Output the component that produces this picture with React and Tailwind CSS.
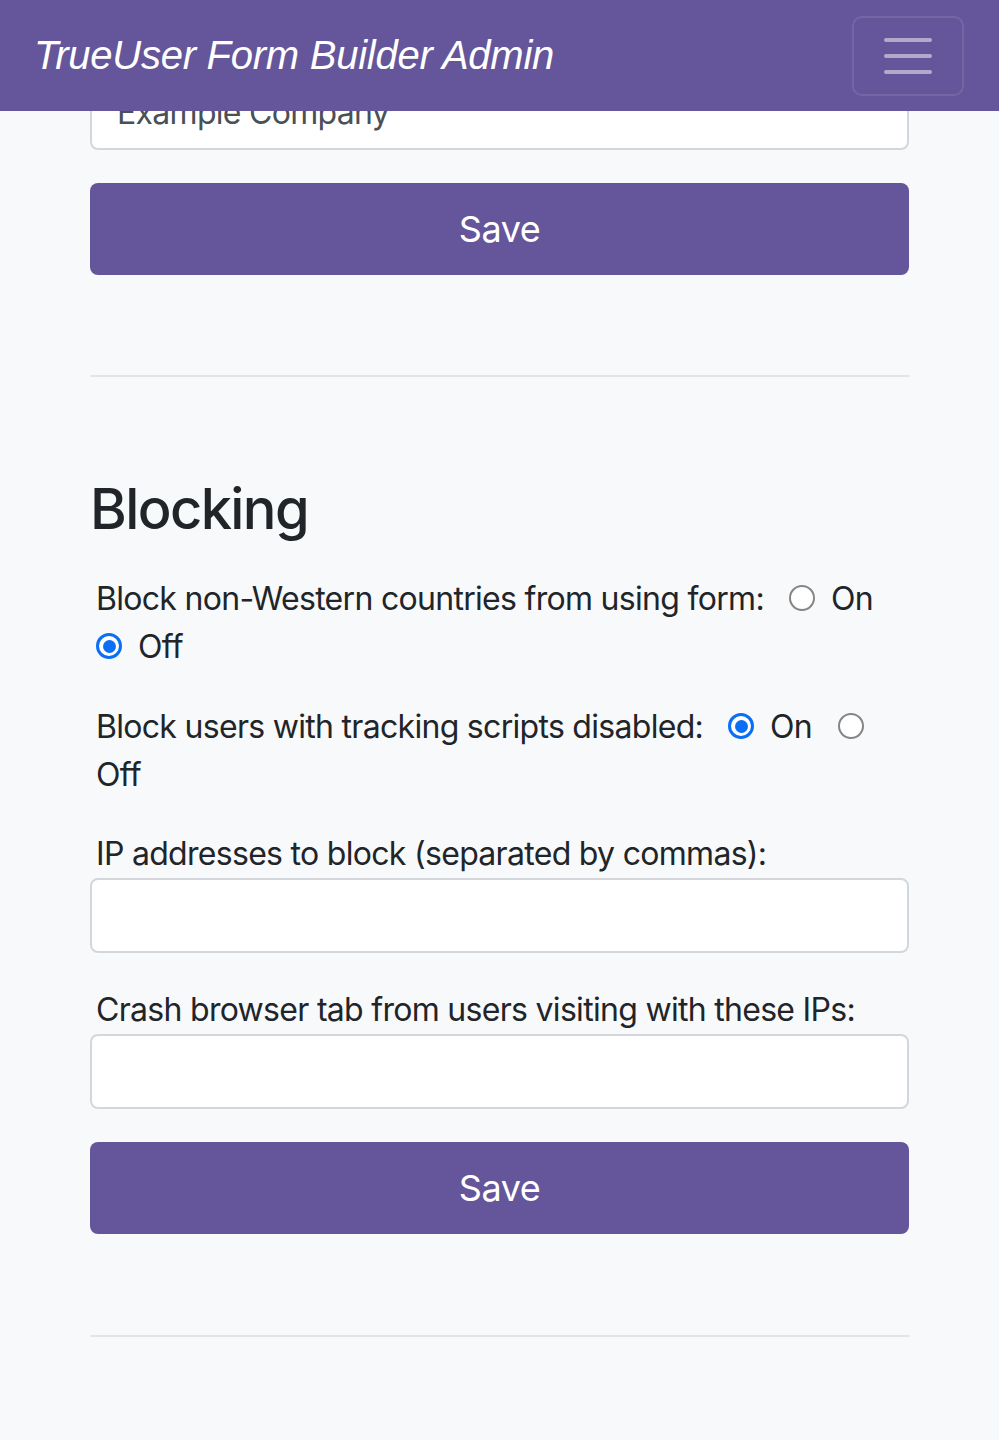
import React from 'react';

// --- small pieces ---

const Radio = ({ checked }) =>
  checked ? (
    <span className="inline-flex items-center justify-center w-[26px] h-[26px] rounded-full border-[3px] border-[#0b6ff5] bg-white align-middle relative -top-[3px]">
      <span className="block w-[13px] h-[13px] rounded-full bg-[#0b6ff5]" />
    </span>
  ) : (
    <span className="inline-block w-[26px] h-[26px] rounded-full border-2 border-[#858585] bg-white align-middle relative -top-[3px]" />
  );

const TextInput = ({ value = '' }) => (
  <div className="h-[75px] w-full rounded-[8px] border-2 border-[#d3d7dc] bg-white px-[25px] flex items-center text-[32px] tracking-[-0.7px] text-[#495057]">
    {value}
  </div>
);

const SaveButton = () => (
  <button className="w-full h-[92px] rounded-[8px] bg-[#65559a] text-white text-[36px] tracking-[-0.5px] flex items-center justify-center">
    Save
  </button>
);

const Divider = () => <div className="h-[2px] bg-[#e3e4e6]" />;

const ToggleRow = ({ label, on }) => (
  <p className="pl-[6px] text-[32px] leading-[48px] tracking-[-0.7px]">
    {label}
    <span className="ml-[25px]"><Radio checked={on} /></span>
    <span className="ml-[16px] mr-[26px] whitespace-nowrap">On</span>
    {on ? null : <br />}
    <Radio checked={!on} />
    {on ? <br /> : null}
    <span className={on ? '' : 'ml-[16px]'}>Off</span>
  </p>
);

// --- page ---

const Navbar = () => (
  <header className="fixed top-0 left-0 right-0 z-10 h-[111px] bg-[#65559a] flex items-center justify-between pl-[34px] pr-[35px]">
    <span className="text-white italic text-[40px] tracking-[-0.25px] pb-[2px] font-['Liberation_Sans',Arial,sans-serif]">
      TrueUser Form Builder Admin
    </span>
    <button className="w-[112px] h-[80px] rounded-[10px] border-2 border-white/10 flex flex-col items-center justify-center gap-[12px]">
      <span className="block w-[48px] h-[4px] rounded-full bg-white/50" />
      <span className="block w-[48px] h-[4px] rounded-full bg-white/50" />
      <span className="block w-[48px] h-[4px] rounded-full bg-white/50" />
    </button>
  </header>
);

export default function App() {
  return (
    <div className="min-h-[1440px] bg-[#f8f9fa] text-[#212529] font-['Inter',sans-serif]">
      <Navbar />
      <main className="mx-[90px] pt-[75px] pb-[104px]">
        <TextInput value="Example Company" />
        <div className="mt-[33px]"><SaveButton /></div>
        <div className="mt-[100px]"><Divider /></div>

        <h3 className="mt-[99px] text-[56px] leading-[67px] font-medium tracking-[-1.6px]">Blocking</h3>

        <div className="mt-[32px]">
          <ToggleRow label="Block non-Western countries from using form:" on={false} />
        </div>
        <div className="mt-[32px]">
          <ToggleRow label="Block users with tracking scripts disabled:" on={true} />
        </div>

        <div className="mt-[31px]">
          <p className="pl-[6px] text-[32px] leading-[48px] tracking-[-0.7px]">IP addresses to block (separated by commas):</p>
          <TextInput />
        </div>
        <div className="mt-[33px]">
          <p className="pl-[6px] text-[32px] leading-[48px] tracking-[-0.7px]">Crash browser tab from users visiting with these IPs:</p>
          <TextInput />
        </div>

        <div className="mt-[33px]"><SaveButton /></div>
        <div className="mt-[101px]"><Divider /></div>
      </main>
    </div>
  );
}
